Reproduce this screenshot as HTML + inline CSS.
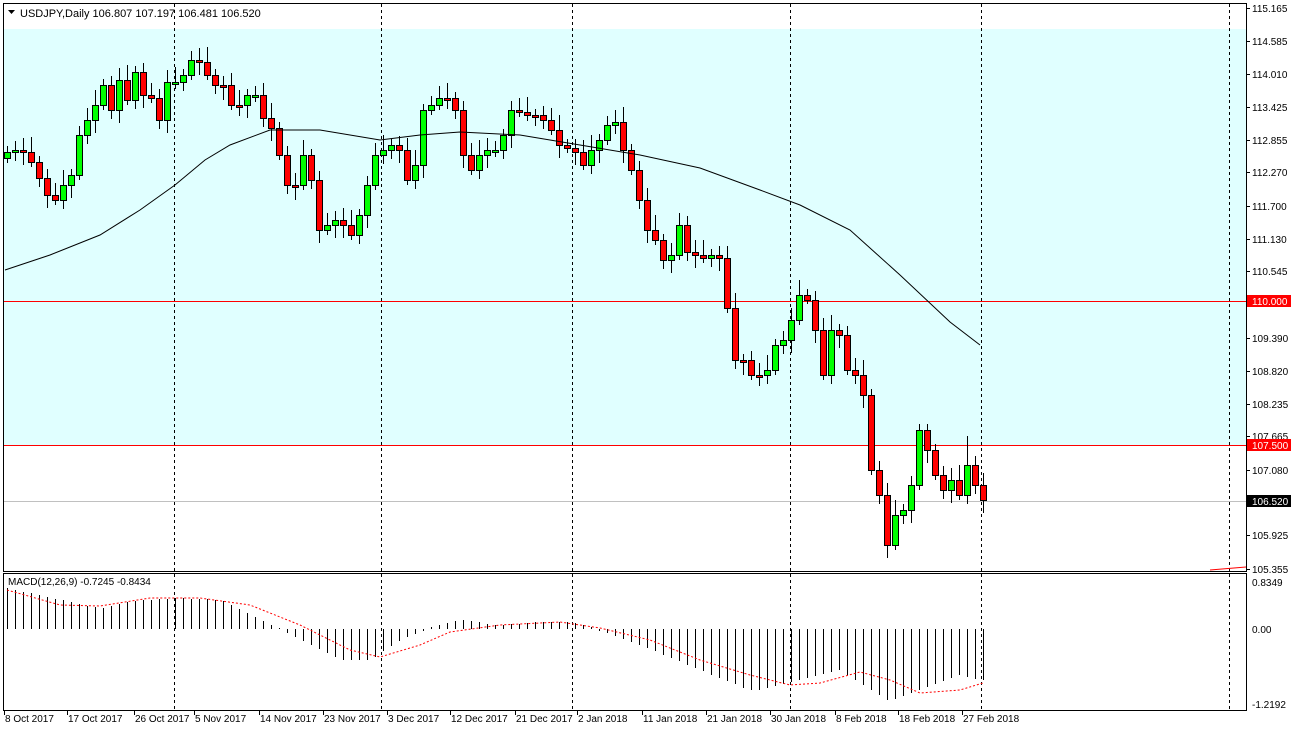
<!DOCTYPE html><html><head><meta charset="utf-8"><style>
body{margin:0;background:#fff;width:1291px;height:733px;overflow:hidden}
svg text{font-family:"Liberation Sans",sans-serif;font-size:10px;fill:#000}
.g{fill:#00ff00;stroke:#000;stroke-width:1}
.r{fill:#ff0000;stroke:#000;stroke-width:1}
</style></head><body>
<svg width="1291" height="733" xmlns="http://www.w3.org/2000/svg">
<rect x="0" y="0" width="1291" height="733" fill="#fff"/>
<rect x="4" y="29" width="1242" height="416" fill="#e0ffff"/>
<g stroke="#000" stroke-dasharray="3,3">
<line x1="174.5" y1="4" x2="174.5" y2="710"/><line x1="381.5" y1="4" x2="381.5" y2="710"/><line x1="572.5" y1="4" x2="572.5" y2="710"/><line x1="790.5" y1="4" x2="790.5" y2="710"/><line x1="981.5" y1="4" x2="981.5" y2="710"/><line x1="1229.5" y1="4" x2="1229.5" y2="710"/>
</g>
<rect x="4" y="301" width="1242" height="1" fill="#ff0000"/>
<rect x="4" y="445" width="1242" height="1" fill="#ff0000"/>
<rect x="4" y="501" width="1242" height="1" fill="#c0c0c0"/>
<path fill="none" stroke="#000" d="M7.5 146V163M15.5 141V161M23.5 138V165M31.5 137V167M39.5 156V187M47.5 169V208M55.5 183V205M63.5 170V209M71.5 169V198M79.5 126V180M87.5 108V144M95.5 90V133M103.5 79V110M111.5 76V119M119.5 68V123M127.5 65V105M135.5 66V109M143.5 63V108M151.5 83V103M159.5 89V129M167.5 70V133M175.5 67V89M183.5 69V91M191.5 51V80M199.5 48V75M207.5 47V80M215.5 69V94M223.5 76V100M231.5 73V110M239.5 90V116M247.5 89V118M255.5 86V102M263.5 83V127M271.5 103V141M279.5 122V160M287.5 146V194M295.5 173V200M303.5 140V190M311.5 149V189M319.5 171V243M327.5 213V235M335.5 211V238M343.5 208V238M351.5 210V240M359.5 209V244M367.5 176V228M375.5 143V190M383.5 135V164M391.5 139V159M399.5 136V163M407.5 138V185M415.5 150V189M423.5 104V178M431.5 96V115M439.5 86V110M447.5 83V109M455.5 92V119M463.5 101V168M471.5 143V175M479.5 140V179M487.5 138V168M495.5 141V157M503.5 129V159M511.5 101V148M519.5 98V117M527.5 97V121M535.5 109V126M543.5 106V129M551.5 108V135M559.5 115V158M567.5 139V153M575.5 139V165M583.5 140V170M591.5 135V174M599.5 134V163M607.5 116V145M615.5 110V134M623.5 107V163M631.5 144V175M639.5 161V209M647.5 188V243M655.5 215V245M663.5 234V269M671.5 243V273M679.5 213V260M687.5 216V261M695.5 240V268M703.5 240V263M711.5 249V267M719.5 246V271M727.5 246V313M735.5 293V369M743.5 354V375M751.5 351V380M759.5 363V386M767.5 355V384M775.5 339V375M783.5 331V354M791.5 308V353M799.5 280V325M807.5 289V304M815.5 291V343M823.5 318V380M831.5 315V384M839.5 324V348M847.5 326V375M855.5 358V384M863.5 360V408M871.5 389V475M879.5 461V504M887.5 483V558M895.5 500V550M903.5 504V524M911.5 476V523M919.5 424V490M927.5 424V463M935.5 444V480M943.5 466V499M951.5 468V503M959.5 465V500M967.5 436V504M975.5 456V494M983.5 473V513"/>
<g>
<rect class="g" x="4.5" y="152.5" width="6" height="6"/>
<rect class="g" x="12.5" y="150.5" width="6" height="2"/>
<rect class="r" x="20.5" y="150.5" width="6" height="2"/>
<rect class="r" x="28.5" y="152.5" width="6" height="10"/>
<rect class="r" x="36.5" y="162.5" width="6" height="16"/>
<rect class="r" x="44.5" y="178.5" width="6" height="17"/>
<rect class="r" x="52.5" y="195.5" width="6" height="5"/>
<rect class="g" x="60.5" y="185.5" width="6" height="15"/>
<rect class="g" x="68.5" y="175.5" width="6" height="10"/>
<rect class="g" x="76.5" y="135.5" width="6" height="40"/>
<rect class="g" x="84.5" y="120.5" width="6" height="15"/>
<rect class="g" x="92.5" y="105.5" width="6" height="15"/>
<rect class="g" x="100.5" y="85.5" width="6" height="20"/>
<rect class="r" x="108.5" y="85.5" width="6" height="25"/>
<rect class="g" x="116.5" y="80.5" width="6" height="30"/>
<rect class="r" x="124.5" y="80.5" width="6" height="20"/>
<rect class="g" x="132.5" y="72.5" width="6" height="28"/>
<rect class="r" x="140.5" y="72.5" width="6" height="23"/>
<rect class="r" x="148.5" y="95.5" width="6" height="3"/>
<rect class="r" x="156.5" y="98.5" width="6" height="22"/>
<rect class="g" x="164.5" y="82.5" width="6" height="38"/>
<rect class="g" x="172.5" y="82.5" width="6" height="2"/>
<rect class="g" x="180.5" y="75.5" width="6" height="7"/>
<rect class="g" x="188.5" y="60.5" width="6" height="15"/>
<rect class="r" x="196.5" y="60.5" width="6" height="2"/>
<rect class="r" x="204.5" y="62.5" width="6" height="13"/>
<rect class="r" x="212.5" y="75.5" width="6" height="10"/>
<rect class="r" x="220.5" y="85.5" width="6" height="2"/>
<rect class="r" x="228.5" y="85.5" width="6" height="20"/>
<rect class="r" x="236.5" y="105.5" width="6" height="2"/>
<rect class="g" x="244.5" y="95.5" width="6" height="10"/>
<rect class="g" x="252.5" y="95.5" width="6" height="2"/>
<rect class="r" x="260.5" y="95.5" width="6" height="23"/>
<rect class="r" x="268.5" y="118.5" width="6" height="10"/>
<rect class="r" x="276.5" y="128.5" width="6" height="27"/>
<rect class="r" x="284.5" y="155.5" width="6" height="30"/>
<rect class="r" x="292.5" y="185.5" width="6" height="2"/>
<rect class="g" x="300.5" y="155.5" width="6" height="30"/>
<rect class="r" x="308.5" y="155.5" width="6" height="25"/>
<rect class="r" x="316.5" y="180.5" width="6" height="50"/>
<rect class="g" x="324.5" y="225.5" width="6" height="5"/>
<rect class="g" x="332.5" y="220.5" width="6" height="5"/>
<rect class="r" x="340.5" y="220.5" width="6" height="5"/>
<rect class="r" x="348.5" y="225.5" width="6" height="10"/>
<rect class="g" x="356.5" y="215.5" width="6" height="20"/>
<rect class="g" x="364.5" y="185.5" width="6" height="30"/>
<rect class="g" x="372.5" y="155.5" width="6" height="30"/>
<rect class="g" x="380.5" y="150.5" width="6" height="5"/>
<rect class="g" x="388.5" y="145.5" width="6" height="5"/>
<rect class="r" x="396.5" y="145.5" width="6" height="5"/>
<rect class="r" x="404.5" y="150.5" width="6" height="30"/>
<rect class="g" x="412.5" y="165.5" width="6" height="15"/>
<rect class="g" x="420.5" y="110.5" width="6" height="55"/>
<rect class="g" x="428.5" y="105.5" width="6" height="5"/>
<rect class="g" x="436.5" y="98.5" width="6" height="7"/>
<rect class="r" x="444.5" y="98.5" width="6" height="2"/>
<rect class="r" x="452.5" y="98.5" width="6" height="12"/>
<rect class="r" x="460.5" y="110.5" width="6" height="45"/>
<rect class="r" x="468.5" y="155.5" width="6" height="15"/>
<rect class="g" x="476.5" y="155.5" width="6" height="15"/>
<rect class="g" x="484.5" y="150.5" width="6" height="5"/>
<rect class="g" x="492.5" y="150.5" width="6" height="2"/>
<rect class="g" x="500.5" y="135.5" width="6" height="15"/>
<rect class="g" x="508.5" y="110.5" width="6" height="25"/>
<rect class="r" x="516.5" y="110.5" width="6" height="2"/>
<rect class="r" x="524.5" y="112.5" width="6" height="3"/>
<rect class="r" x="532.5" y="115.5" width="6" height="2"/>
<rect class="r" x="540.5" y="115.5" width="6" height="5"/>
<rect class="r" x="548.5" y="120.5" width="6" height="10"/>
<rect class="r" x="556.5" y="130.5" width="6" height="15"/>
<rect class="r" x="564.5" y="145.5" width="6" height="3"/>
<rect class="r" x="572.5" y="148.5" width="6" height="4"/>
<rect class="r" x="580.5" y="152.5" width="6" height="13"/>
<rect class="g" x="588.5" y="150.5" width="6" height="15"/>
<rect class="g" x="596.5" y="140.5" width="6" height="10"/>
<rect class="g" x="604.5" y="125.5" width="6" height="15"/>
<rect class="g" x="612.5" y="122.5" width="6" height="3"/>
<rect class="r" x="620.5" y="122.5" width="6" height="28"/>
<rect class="r" x="628.5" y="150.5" width="6" height="20"/>
<rect class="r" x="636.5" y="170.5" width="6" height="30"/>
<rect class="r" x="644.5" y="200.5" width="6" height="30"/>
<rect class="r" x="652.5" y="230.5" width="6" height="10"/>
<rect class="r" x="660.5" y="240.5" width="6" height="20"/>
<rect class="g" x="668.5" y="255.5" width="6" height="5"/>
<rect class="g" x="676.5" y="225.5" width="6" height="30"/>
<rect class="r" x="684.5" y="225.5" width="6" height="27"/>
<rect class="r" x="692.5" y="252.5" width="6" height="3"/>
<rect class="r" x="700.5" y="255.5" width="6" height="3"/>
<rect class="g" x="708.5" y="255.5" width="6" height="3"/>
<rect class="r" x="716.5" y="255.5" width="6" height="3"/>
<rect class="r" x="724.5" y="258.5" width="6" height="50"/>
<rect class="r" x="732.5" y="308.5" width="6" height="52"/>
<rect class="r" x="740.5" y="360.5" width="6" height="2"/>
<rect class="r" x="748.5" y="360.5" width="6" height="15"/>
<rect class="r" x="756.5" y="375.5" width="6" height="2"/>
<rect class="g" x="764.5" y="370.5" width="6" height="5"/>
<rect class="g" x="772.5" y="345.5" width="6" height="25"/>
<rect class="g" x="780.5" y="340.5" width="6" height="5"/>
<rect class="g" x="788.5" y="320.5" width="6" height="20"/>
<rect class="g" x="796.5" y="295.5" width="6" height="25"/>
<rect class="r" x="804.5" y="295.5" width="6" height="5"/>
<rect class="r" x="812.5" y="300.5" width="6" height="30"/>
<rect class="r" x="820.5" y="330.5" width="6" height="45"/>
<rect class="g" x="828.5" y="330.5" width="6" height="45"/>
<rect class="r" x="836.5" y="330.5" width="6" height="5"/>
<rect class="r" x="844.5" y="335.5" width="6" height="35"/>
<rect class="r" x="852.5" y="370.5" width="6" height="5"/>
<rect class="r" x="860.5" y="375.5" width="6" height="20"/>
<rect class="r" x="868.5" y="395.5" width="6" height="75"/>
<rect class="r" x="876.5" y="470.5" width="6" height="25"/>
<rect class="r" x="884.5" y="495.5" width="6" height="50"/>
<rect class="g" x="892.5" y="515.5" width="6" height="30"/>
<rect class="g" x="900.5" y="510.5" width="6" height="5"/>
<rect class="g" x="908.5" y="485.5" width="6" height="25"/>
<rect class="g" x="916.5" y="430.5" width="6" height="55"/>
<rect class="r" x="924.5" y="430.5" width="6" height="20"/>
<rect class="r" x="932.5" y="450.5" width="6" height="25"/>
<rect class="r" x="940.5" y="475.5" width="6" height="15"/>
<rect class="g" x="948.5" y="480.5" width="6" height="10"/>
<rect class="r" x="956.5" y="480.5" width="6" height="15"/>
<rect class="g" x="964.5" y="465.5" width="6" height="30"/>
<rect class="r" x="972.5" y="465.5" width="6" height="20"/>
<rect class="r" x="980.5" y="485.5" width="6" height="15"/>
</g>
<polyline fill="none" stroke="#000" points="5,270 50,255 100,235 140,210 175,185 205,160 230,145 270,130 320,130 380,140 420,135 460,132 520,135 580,145 640,155 700,168 760,190 800,205 850,230 900,275 950,322 980,345"/>
<path fill="none" stroke="#000" d="M7.5 629V588M15.5 629V590M23.5 629V592M31.5 629V593M39.5 629V595M47.5 629V597M55.5 629V599M63.5 629V600M71.5 629V602M79.5 629V604M87.5 629V606M95.5 629V607M103.5 629V608M111.5 629V606M119.5 629V604M127.5 629V602M135.5 629V601M143.5 629V600M151.5 629V600M159.5 629V599M167.5 629V599M175.5 629V598M183.5 629V598M191.5 629V599M199.5 629V599M207.5 629V599M215.5 629V600M223.5 629V601M231.5 629V605M239.5 629V609M247.5 629V613M255.5 629V617M263.5 629V621M271.5 629V625M279.5 629V628M287.5 629V633M295.5 629V637M303.5 629V641M311.5 629V645M319.5 629V649M327.5 629V653M335.5 629V657M343.5 629V660M351.5 629V660M359.5 629V660M367.5 629V660M375.5 629V657M383.5 629V651M391.5 629V646M399.5 629V641M407.5 629V637M415.5 629V634M423.5 629V631M431.5 629V627M439.5 629V625M447.5 629V623M455.5 629V621M463.5 629V620M471.5 629V621M479.5 629V622M487.5 629V624M495.5 629V625M503.5 629V625M511.5 629V624M519.5 629V624M527.5 629V623M535.5 629V622M543.5 629V622M551.5 629V622M559.5 629V622M567.5 629V622M575.5 629V623M583.5 629V625M591.5 629V627M599.5 629V631M607.5 629V633M615.5 629V636M623.5 629V639M631.5 629V642M639.5 629V645M647.5 629V648M655.5 629V651M663.5 629V655M671.5 629V658M679.5 629V661M687.5 629V665M695.5 629V668M703.5 629V671M711.5 629V675M719.5 629V678M727.5 629V681M735.5 629V684M743.5 629V688M751.5 629V690M759.5 629V690M767.5 629V688M775.5 629V686M783.5 629V684M791.5 629V682M799.5 629V680M807.5 629V678M815.5 629V676M823.5 629V674M831.5 629V672M839.5 629V670M847.5 629V675M855.5 629V680M863.5 629V685M871.5 629V690M879.5 629V695M887.5 629V700M895.5 629V699M903.5 629V696M911.5 629V693M919.5 629V690M927.5 629V687M935.5 629V684M943.5 629V681M951.5 629V678M959.5 629V675M967.5 629V677M975.5 629V679M983.5 629V680"/>
<polyline fill="none" stroke="#ff0000" stroke-dasharray="2,2" points="7,590 60,605 100,606 150,598 200,598 250,605 300,625 350,650 380,657 420,645 450,632 500,625 560,622 600,628 650,640 700,660 750,675 790,685 820,683 860,672 890,680 920,693 960,690 983,683"/>
<line x1="1210" y1="570" x2="1246" y2="567" stroke="#ff0000"/>
<rect x="3.5" y="3.5" width="1243" height="568" fill="none" stroke="#000"/>
<rect x="3.5" y="573.5" width="1243" height="137" fill="none" stroke="#000"/>
<rect x="4" y="4" width="300" height="20" fill="#fff" opacity="0"/>
<path d="M8 10h7l-3.5 4z" fill="#000"/>
<text x="20" y="17" style="font-size:11px">USDJPY,Daily  106.807 107.197 106.481 106.520</text>
<text x="8" y="585">MACD(12,26,9) -0.7245 -0.8434</text>
<g stroke="#000">
<line x1="1246" y1="8.5" x2="1250" y2="8.5"/><line x1="1246" y1="41.5" x2="1250" y2="41.5"/><line x1="1246" y1="74.5" x2="1250" y2="74.5"/><line x1="1246" y1="107.5" x2="1250" y2="107.5"/><line x1="1246" y1="140.5" x2="1250" y2="140.5"/><line x1="1246" y1="172.5" x2="1250" y2="172.5"/><line x1="1246" y1="206.5" x2="1250" y2="206.5"/><line x1="1246" y1="239.5" x2="1250" y2="239.5"/><line x1="1246" y1="271.5" x2="1250" y2="271.5"/><line x1="1246" y1="338.5" x2="1250" y2="338.5"/><line x1="1246" y1="371.5" x2="1250" y2="371.5"/><line x1="1246" y1="404.5" x2="1250" y2="404.5"/><line x1="1246" y1="436.5" x2="1250" y2="436.5"/><line x1="1246" y1="470.5" x2="1250" y2="470.5"/><line x1="1246" y1="535.5" x2="1250" y2="535.5"/><line x1="1246" y1="569.5" x2="1250" y2="569.5"/>
</g>
<text x="1252" y="12">115.165</text><text x="1252" y="45">114.585</text><text x="1252" y="78">114.010</text><text x="1252" y="111">113.425</text><text x="1252" y="144">112.855</text><text x="1252" y="176">112.270</text><text x="1252" y="210">111.700</text><text x="1252" y="243">111.130</text><text x="1252" y="275">110.545</text><text x="1252" y="342">109.390</text><text x="1252" y="375">108.820</text><text x="1252" y="408">108.235</text><text x="1252" y="440">107.665</text><text x="1252" y="474">107.080</text><text x="1252" y="539">105.925</text><text x="1252" y="573">105.355</text>
<rect x="1247" y="295" width="44" height="12" fill="#ff0000"/><text x="1252" y="305" style="fill:#fff">110.000</text>
<rect x="1247" y="439" width="44" height="12" fill="#ff0000"/><text x="1252" y="449" style="fill:#fff">107.500</text>
<rect x="1247" y="495" width="44" height="12" fill="#000"/><text x="1252" y="505" style="fill:#fff">106.520</text>
<text x="1252" y="586">0.8349</text><text x="1252" y="633">0.00</text><text x="1252" y="708">-1.2192</text>
<g stroke="#000"><line x1="4.5" y1="711" x2="4.5" y2="715"/><line x1="67.5" y1="711" x2="67.5" y2="715"/><line x1="134.5" y1="711" x2="134.5" y2="715"/><line x1="194.5" y1="711" x2="194.5" y2="715"/><line x1="259.5" y1="711" x2="259.5" y2="715"/><line x1="323.5" y1="711" x2="323.5" y2="715"/><line x1="387.5" y1="711" x2="387.5" y2="715"/><line x1="450.5" y1="711" x2="450.5" y2="715"/><line x1="515.5" y1="711" x2="515.5" y2="715"/><line x1="577.5" y1="711" x2="577.5" y2="715"/><line x1="642.5" y1="711" x2="642.5" y2="715"/><line x1="706.5" y1="711" x2="706.5" y2="715"/><line x1="770.5" y1="711" x2="770.5" y2="715"/><line x1="835.5" y1="711" x2="835.5" y2="715"/><line x1="898.5" y1="711" x2="898.5" y2="715"/><line x1="962.5" y1="711" x2="962.5" y2="715"/></g>
<text x="5" y="722">8 Oct 2017</text><text x="68" y="722">17 Oct 2017</text><text x="135" y="722">26 Oct 2017</text><text x="195" y="722">5 Nov 2017</text><text x="260" y="722">14 Nov 2017</text><text x="324" y="722">23 Nov 2017</text><text x="388" y="722">3 Dec 2017</text><text x="451" y="722">12 Dec 2017</text><text x="516" y="722">21 Dec 2017</text><text x="578" y="722">2 Jan 2018</text><text x="643" y="722">11 Jan 2018</text><text x="707" y="722">21 Jan 2018</text><text x="771" y="722">30 Jan 2018</text><text x="836" y="722">8 Feb 2018</text><text x="899" y="722">18 Feb 2018</text><text x="963" y="722">27 Feb 2018</text>
</svg>
</body></html>
